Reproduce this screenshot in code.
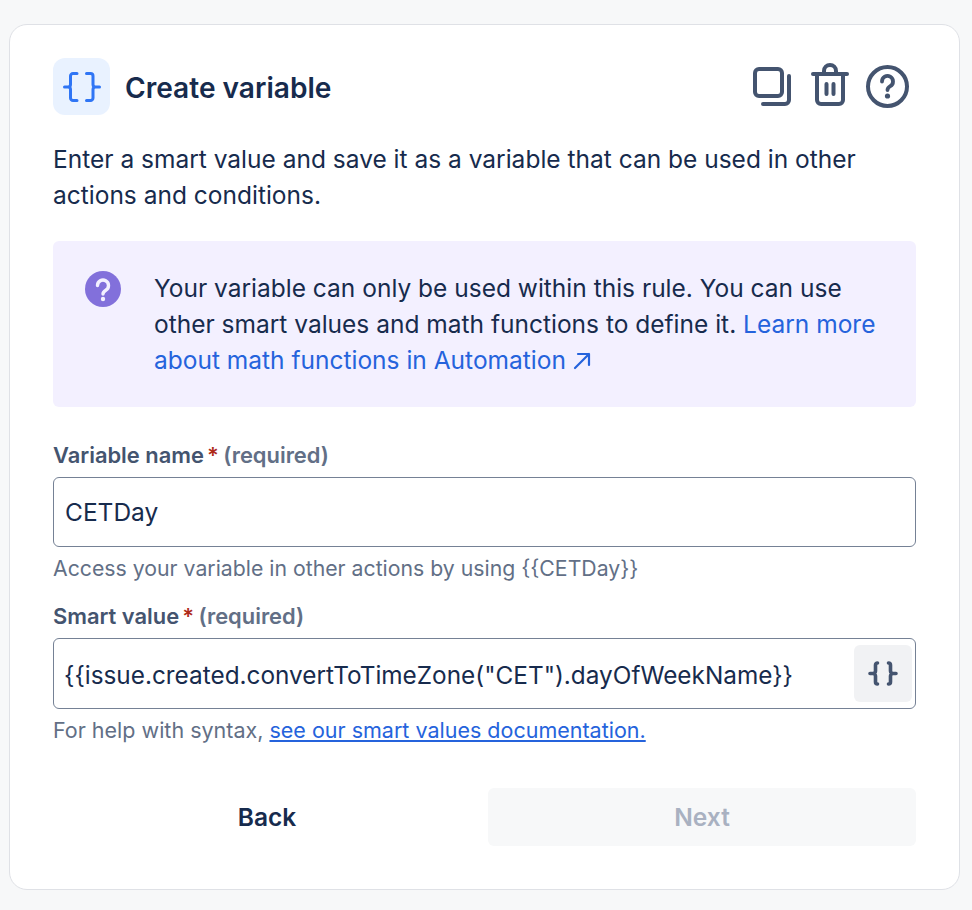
<div class="page">
  <section class="card">
    <header class="head">
      <div class="tile">
        <svg width="38" height="30" viewBox="0 0 38 30" fill="none" stroke="#2f75f5" stroke-width="3" stroke-linecap="round" stroke-linejoin="round">
          <path d="M14 1.500H10a2.500 2.500 0 0 0-2.500 2.500v8.500A2.500 2.500 0 0 1 5 15H1.500H5a2.500 2.500 0 0 1 2.500 2.500V26a2.500 2.500 0 0 0 2.500 2.500h4" />
          <path d="M23.500 1.500h4A2.500 2.500 0 0 1 30 4v8.500a2.500 2.500 0 0 0 2.500 2.500h4h-4a2.500 2.500 0 0 0-2.500 2.500V26a2.500 2.500 0 0 1-2.500 2.500h-4" />
        </svg>
      </div>
      <h1>Create variable</h1>
      <div class="tools">
        <svg class="copy" width="38" height="39" viewBox="0 0 38 39" fill="none" stroke="#44546f" stroke-width="4" stroke-linecap="round" stroke-linejoin="round">
          <rect x="2" y="2" width="27" height="27" rx="4" />
          <path d="M36 9v24a4 4 0 0 1-4 4H10" />
        </svg>
        <svg class="trash" width="38" height="43" viewBox="0 0 38 43" fill="none" stroke="#44546f" stroke-width="4" stroke-linecap="round" stroke-linejoin="round">
          <path d="M2 11h34" />
          <path d="M13 10V8a6 6 0 0 1 12 0v2" />
          <path d="M6 11v26a4 4 0 0 0 4 4h18a4 4 0 0 0 4-4V11" />
          <path d="M15.500 21v10M22.500 21v10" />
        </svg>
        <svg width="43" height="43" viewBox="0 0 43 43" fill="none">
          <circle cx="21.500" cy="21.500" r="19.500" stroke="#44546f" stroke-width="4" />
          <path d="M16 16.500a5.500 5.500 0 1 1 8.300 4.700c-1.800 1.100-2.800 2-2.800 3.800" stroke="#44546f" stroke-width="3.800" stroke-linecap="round" />
          <circle cx="21.500" cy="31" r="2.600" fill="#44546f" />
        </svg>
      </div>
    </header>

    <p class="intro">Enter a smart value and save it as a variable that can be used in other actions and conditions.</p>

    <div class="notice">
      <svg class="notice-icon" width="36" height="36" viewBox="0 0 36 36">
        <circle cx="18" cy="18" r="18" fill="#8270db" />
        <path d="M12.500 14.500a5.500 5.500 0 1 1 8.300 4.700c-1.700 1-2.800 2-2.800 3.800" fill="none" stroke="#f3f0ff" stroke-width="3.400" stroke-linecap="round" />
        <circle cx="18" cy="28" r="2.200" fill="#f3f0ff" />
      </svg>
      <p>Your variable can only be used within this rule. You can use other smart values and math functions to define it. <a href="#top">Learn more about math functions in Automation <svg class="ext" width="18" height="18" viewBox="0 0 18 18" fill="none" stroke="currentColor" stroke-width="2.200" stroke-linecap="round" stroke-linejoin="round"><path d="M2 16 16 2M5 2h11v11" /></svg></a></p>
    </div>

    <div class="field first">
      <label for="name">Variable name<span class="star">*</span> <span class="req">(required)</span></label>
      <div class="input"><input id="name" value="CETDay" /></div>
      <small>Access your variable in other actions by using {'{{'}CETDay{'}}'}</small>
    </div>

    <div class="field second">
      <label for="smart">Smart value<span class="star">*</span> <span class="req">(required)</span></label>
      <div class="input tall">
        <input id="smart" value={'{{issue.created.convertToTimeZone("CET").dayOfWeekName}}'} />
        <button class="picker" aria-label="Insert smart value">
          <svg width="30" height="25" viewBox="0 0 30 25" fill="none" stroke="#44546f" stroke-width="3.600" stroke-linecap="round" stroke-linejoin="round">
            <path d="M9.500 2A2 2 0 0 0 7.500 4v6a2.500 2.500 0 0 1-2.500 2.500H2H5A2.500 2.500 0 0 1 7.500 15v6a2 2 0 0 0 2 2" />
            <path d="M20.500 2a2 2 0 0 1 2 2v6a2.500 2.500 0 0 0 2.500 2.500h3h-3a2.500 2.500 0 0 0-2.500 2.500v6a2 2 0 0 1-2 2" />
          </svg>
        </button>
      </div>
      <small class="help">For help with syntax, <a href="#top" class="under">see our smart values documentation.</a></small>
    </div>

    <footer class="actions">
      <button class="btn back">Back</button>
      <button class="btn next" disabled>Next</button>
    </footer>
  </section>
</div>

<style>
  :global(body) {
    margin: 0;
    background: #f7f8f9;
  }

  .page {
    padding: 24px 12px 20px 9px;
    font-family: Inter, "Noto Sans", sans-serif;
    font-size: 24.500px;
    line-height: 36px;
    color: #172b4d;
  }

  .card {
    box-sizing: border-box;
    height: 866px;
    padding: 33px 43px 0;
    background: #fff;
    border: 1px solid #dfe1e6;
    border-radius: 18px;
  }

  .head {
    display: flex;
    align-items: center;
    height: 57px;
  }

  .tile {
    display: flex;
    align-items: center;
    justify-content: center;
    width: 57px;
    height: 57px;
    margin-right: 15px;
    border-radius: 12px;
    background: #e9f2ff;
  }

  h1 {
    margin: 2px 0 0;
    flex: 1;
    font-size: 28.100px;
    font-weight: 600;
    line-height: 36px;
  }

  .tools {
    display: flex;
    align-items: center;
    gap: 17px;
    margin-right: 7px;
  }

  .copy {
    margin-right: 3px;
  }

  .trash {
    margin-bottom: 4px;
  }

  .intro {
    margin: 26px 0 0;
  }

  .notice {
    display: flex;
    gap: 33px;
    box-sizing: border-box;
    height: 166px;
    margin-top: 28px;
    padding: 29px 32px;
    background: #f3f0ff;
    border-radius: 6px;
  }

  .notice-icon {
    flex: none;
    margin-top: 1px;
  }

  .notice p {
    margin: 0;
  }

  a {
    color: #2563dc;
    text-decoration: none;
  }

  .under {
    text-decoration: underline;
  }

  .ext {
    vertical-align: -1px;
  }

  .field label {
    display: block;
    font-size: 21.900px;
    font-weight: 600;
    line-height: 28px;
    color: #44546f;
  }

  .first {
    margin-top: 34px;
  }

  .second {
    margin-top: 16px;
  }

  .star {
    margin-left: 3px;
    color: #ae2a19;
  }

  .req {
    margin-left: -1px;
    color: #626f86;
  }

  .input {
    display: flex;
    align-items: center;
    box-sizing: border-box;
    height: 70px;
    margin-top: 8px;
    padding-right: 3px;
    background: #fff;
    border: 1px solid #758195;
    border-radius: 6px;
  }

  input {
    flex: 1;
    min-width: 0;
    height: 100%;
    padding: 0 11px;
    border: 0;
    outline: 0;
    background: transparent;
    font: inherit;
    color: #172b4d;
  }

  .tall {
    height: 71px;
  }

  .tall input {
    box-sizing: border-box;
    padding: 2px 10px 0;
    font-size: 24.350px;
  }

  .picker {
    display: flex;
    align-items: center;
    justify-content: center;
    width: 58px;
    height: 57px;
    padding: 0;
    border: 0;
    border-radius: 6px;
    background: #f1f2f4;
  }

  small {
    display: block;
    margin-top: 3px;
    font-size: 21.250px;
    line-height: 36px;
    color: #626f86;
  }

  .help {
    margin-top: 3px;
    font-size: 21.500px;
  }

  .actions {
    display: grid;
    grid-template-columns: 1fr 1fr;
    gap: 7px;
    margin-top: 40px;
  }

  .btn {
    height: 58px;
    border: 0;
    border-radius: 6px;
    font: inherit;
    font-weight: 600;
  }

  .back {
    background: transparent;
    color: #172b4d;
  }

  .next {
    background: #f7f8f9;
    color: #a9b1c1;
  }
</style>
